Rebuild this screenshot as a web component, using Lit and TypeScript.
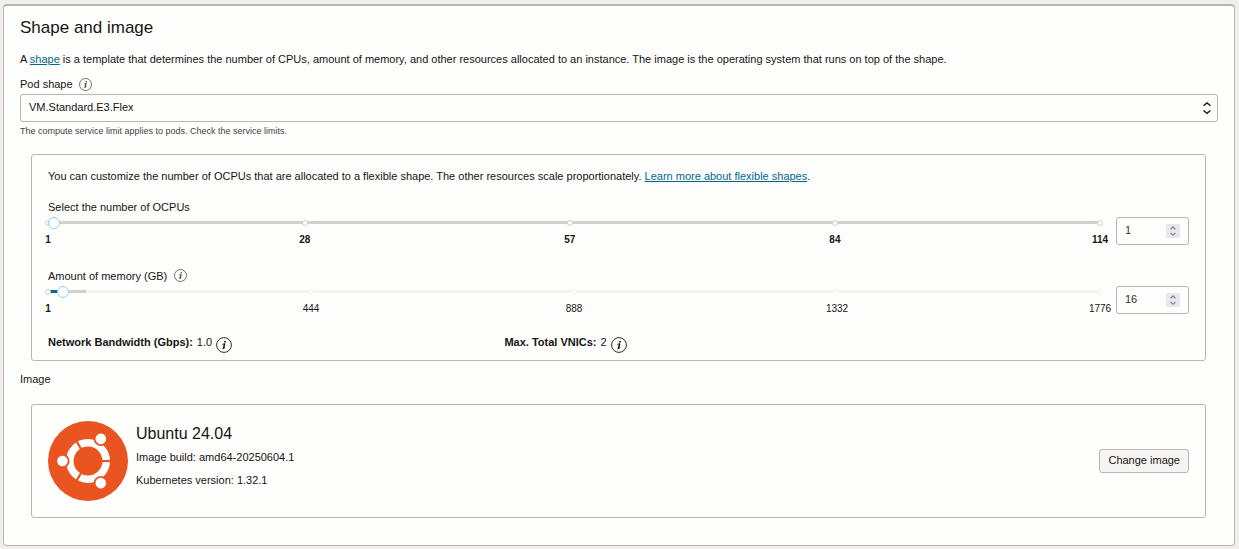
import { LitElement, html, css, svg } from "lit";
import { customElement, property, state } from "lit/decorators.js";

interface Stop {
  label: string;
  at: number;
  strong?: boolean;
}

const ocpuStops: Stop[] = [
  { label: "1", at: 0, strong: true },
  { label: "28", at: 244, strong: true },
  { label: "57", at: 496, strong: true },
  { label: "84", at: 748, strong: true },
  { label: "114", at: 1000, strong: true },
];

const memoryStops: Stop[] = [
  { label: "1", at: 0, strong: true },
  { label: "444", at: 250 },
  { label: "888", at: 500 },
  { label: "1332", at: 750 },
  { label: "1776", at: 1000 },
];

@customElement("info-icon")
class InfoIcon extends LitElement {
  static styles = css`
    :host {
      display: inline-flex;
      width: 13px;
      height: 13px;
      color: #45413e;
    }
    :host([large]) {
      width: 16px;
      height: 16px;
      color: #161513;
    }
    svg {
      width: 100%;
      height: 100%;
    }
  `;

  render() {
    return html`<svg viewBox="0 0 16 16" role="img" aria-label="Information">
      <circle cx="8" cy="8" r="7.4" fill="none" stroke="currentColor" stroke-width="0.9" />
      <circle cx="9" cy="4.7" r="0.9" fill="currentColor" />
      <path
        d="M6.5 7.3 L8 6.9 M6.9 11.6 L8.9 10.6"
        fill="none"
        stroke="currentColor"
        stroke-width="0.8"
        stroke-linecap="round"
      />
      <path
        d="M8.6 6.9 L7.5 11.2"
        fill="none"
        stroke="currentColor"
        stroke-width="1.5"
        stroke-linecap="round"
      />
    </svg>`;
  }
}

@customElement("resource-slider")
class ResourceSlider extends LitElement {
  static styles = css`
    :host {
      display: block;
    }
    .label {
      display: flex;
      align-items: center;
      gap: 7px;
      height: 17px;
      margin-bottom: 2px;
    }
    .row {
      display: grid;
      grid-template-columns: 1fr 73px;
      align-items: start;
      gap: 16px;
    }
    .slider {
      display: grid;
      align-items: start;
    }
    .slider > * {
      grid-area: 1 / 1;
    }
    .track {
      display: flex;
      height: 3px;
      margin-top: 4px;
      background: #f5f4f2;
    }
    .filled {
      background: #00688c;
    }
    .available {
      background: #d4cfca;
    }
    .stops {
      display: flex;
      margin-top: 3px;
    }
    .stop {
      display: flex;
      flex-direction: column;
      align-items: center;
      gap: 8px;
      width: 0;
      font-size: 10px;
      line-height: 12px;
    }
    .dot {
      box-sizing: border-box;
      flex: none;
      width: 6px;
      height: 6px;
      border: 1px solid #d4cfca;
      border-radius: 50%;
      background: #fefefc;
    }
    .dot.faint {
      border-color: #f3f2f0;
    }
    .strong {
      font-weight: 700;
    }
    .range {
      appearance: none;
      width: 100%;
      height: 12px;
      margin: 0;
      background: transparent;
    }
    .range::-webkit-slider-thumb {
      appearance: none;
      box-sizing: border-box;
      width: 12px;
      height: 12px;
      border: 1px solid #8fd2f5;
      border-radius: 50%;
      background: #ffffff;
    }
    .number {
      display: grid;
      grid-template-columns: 1fr 23px;
      align-items: center;
    }
    .value {
      grid-area: 1 / 1 / 2 / 3;
      appearance: textfield;
      box-sizing: border-box;
      width: 100%;
      height: 28px;
      margin: 0;
      padding: 0 24px 2px 8px;
      border: 1px solid #bbb5ae;
      border-radius: 3px;
      background: #fefefc;
      color: #33302d;
      font: inherit;
    }
    .value::-webkit-inner-spin-button {
      appearance: none;
      margin: 0;
    }
    .spin {
      grid-area: 1 / 2;
      width: 14px;
      height: 14px;
      background: #e8e7ed;
      pointer-events: none;
    }
  `;

  @property() label = "";
  @property() name = "";
  @property({ type: Number }) max = 1;
  @property({ type: Number }) limit = 1;
  @property({ type: Number }) value = 1;
  @property({ type: Boolean }) info = false;
  @property({ attribute: false }) stops: Stop[] = [];

  private onInput(e: Event) {
    this.value = Number((e.target as HTMLInputElement).value);
  }

  render() {
    const used = ((this.value - 1) / (this.max - 1)) * 100;
    const open = (this.limit / this.max) * 100 - used;
    return html`
      <div class="label">
        <label for=${this.name}>${this.label}</label>
        ${this.info ? html`<info-icon></info-icon>` : ""}
      </div>
      <div class="row">
        <div class="slider">
          <div class="track">
            <span class="filled" style="width:${used}%"></span>
            <span class="available" style="width:${open}%"></span>
          </div>
          <div class="stops">
            ${this.stops.map((s, i) => {
              const next = this.stops[i + 1];
              const faint = s.at / 10 > used + open;
              return html`<div class="stop">
                  <span class="dot ${faint ? "faint" : ""}"></span>
                  <span class=${s.strong ? "strong" : ""}>${s.label}</span>
                </div>
                ${next ? html`<div style="flex:${next.at - s.at}"></div>` : ""}`;
            })}
          </div>
          <input
            class="range"
            type="range"
            id=${this.name}
            min="1"
            max=${this.max}
            .value=${String(this.value)}
            @input=${this.onInput}
          />
        </div>
        <div class="number">
          <input
            class="value"
            type="number"
            aria-label=${this.label}
            min="1"
            max=${this.max}
            .value=${String(this.value)}
            @input=${this.onInput}
          />
          <svg class="spin" viewBox="0 0 14 14" aria-hidden="true">
            <path
              d="M4.5 5.2 L7 2.9 L9.5 5.2 M4.5 8.9 L7 11.2 L9.5 8.9"
              fill="none"
              stroke="#8b8a91"
              stroke-width="1.3"
            />
          </svg>
        </div>
      </div>
    `;
  }
}

@customElement("app-root")
class AppRoot extends LitElement {
  static styles = css`
    :host {
      display: block;
      box-sizing: border-box;
      min-height: 100vh;
      padding: 4px 4px 3px 3px;
      background: #f1efed;
      color: #161513;
      font-family: "Liberation Sans", Arial, sans-serif;
      font-size: 11px;
      line-height: 16px;
    }
    .card {
      padding: 10px 16px 27px;
      border: 1px solid #bbb5ae;
      border-top-width: 2px;
      border-radius: 4px;
      background: #fefefc;
    }
    h2,
    h3,
    p,
    dl,
    dd {
      margin: 0;
      font-weight: 400;
    }
    h2 {
      font-size: 17px;
      line-height: 24px;
    }
    a {
      color: #00688c;
      text-decoration: underline;
      text-underline-offset: 1px;
    }
    .intro {
      margin-top: 11px;
    }
    .label {
      display: flex;
      align-items: center;
      gap: 6px;
      margin-top: 9px;
    }
    .select {
      display: grid;
      grid-template-columns: 1fr 16px;
      align-items: center;
      margin-top: 2px;
    }
    select {
      grid-area: 1 / 1 / 2 / 3;
      appearance: none;
      width: 100%;
      height: 28px;
      padding: 0 24px 2px 8px;
      border: 1px solid #bbb5ae;
      border-radius: 3px;
      background: #fefefc;
      color: inherit;
      font: inherit;
    }
    .arrows {
      grid-area: 1 / 2;
      width: 10px;
      height: 14px;
      pointer-events: none;
    }
    .hint {
      margin-top: 3px;
      color: #45413e;
      font-size: 9px;
      line-height: 12px;
    }
    .panel {
      margin: 17px 12px 0 11px;
      padding: 13px 16px 7px;
      border: 1px solid #bbb5ae;
      border-radius: 3px;
    }
    .ocpu {
      margin-top: 14px;
    }
    .memory {
      margin-top: 21px;
    }
    .facts {
      display: grid;
      grid-template-columns: 2fr 3fr;
      margin-top: 19px;
    }
    .fact {
      display: flex;
      gap: 4px;
    }
    .fact dt {
      font-weight: 700;
    }
    .fact info-icon {
      margin-top: 3px;
    }
    .section {
      margin-top: 10px;
    }
    .image {
      display: flex;
      align-items: center;
      gap: 8px;
      padding: 16px;
    }
    .logo {
      width: 80px;
      height: 80px;
    }
    .details {
      flex: 1;
      align-self: start;
      line-height: 23px;
    }
    h3 {
      font-size: 16px;
      line-height: 25px;
    }
    button {
      height: 24px;
      padding: 0 8px 2px;
      border: 1px solid #bbb5ae;
      border-radius: 3px;
      background: #f6f5f3;
      color: inherit;
      font: inherit;
    }
  `;

  @state() shape = "VM.Standard.E3.Flex";

  private logo() {
    const angles = [0, 120, 240];
    return html`<svg class="logo" viewBox="0 0 80 80" role="img" aria-label="Ubuntu">
      <circle cx="40" cy="40" r="40" fill="#e95420" />
      <circle cx="40" cy="40" r="18.2" fill="none" stroke="#ffffff" stroke-width="7.6" />
      ${angles.map(
        (a) => svg`<g transform="rotate(${a} 40 40)">
          <rect x="53" y="38.9" width="10" height="2.2" fill="#e95420" />
          <circle cx="14.4" cy="40" r="7.2" fill="#e95420" />
          <circle cx="14.4" cy="40" r="5.3" fill="#ffffff" />
        </g>`
      )}
    </svg>`;
  }

  render() {
    return html`
      <section class="card">
        <h2>Shape and image</h2>
        <p class="intro">
          A <a href="#shape">shape</a> is a template that determines the number of CPUs, amount of
          memory, and other resources allocated to an instance. The image is the operating system
          that runs on top of the shape.
        </p>
        <div class="label"><label for="shape">Pod shape</label><info-icon></info-icon></div>
        <div class="select">
          <select id="shape">
            <option>${this.shape}</option>
          </select>
          <svg class="arrows" viewBox="0 0 10 14" aria-hidden="true">
            <path
              d="M1.5 4.8 L5 1.9 L8.5 4.8 M1.5 9.4 L5 12.3 L8.5 9.4"
              fill="none"
              stroke="#161513"
              stroke-width="1.3"
            />
          </svg>
        </div>
        <p class="hint">The compute service limit applies to pods. Check the service limits.</p>

        <div class="panel">
          <p>
            You can customize the number of OCPUs that are allocated to a flexible shape. The other
            resources scale proportionately.
            <a href="#flexible">Learn more about flexible shapes</a>.
          </p>
          <resource-slider
            class="ocpu"
            name="ocpus"
            label="Select the number of OCPUs"
            max="114"
            limit="114"
            value="1"
            .stops=${ocpuStops}
          ></resource-slider>
          <resource-slider
            class="memory"
            name="memory"
            label="Amount of memory (GB)"
            info
            max="1776"
            limit="64"
            value="16"
            .stops=${memoryStops}
          ></resource-slider>
          <dl class="facts">
            <div class="fact">
              <dt>Network Bandwidth (Gbps):</dt>
              <dd>1.0</dd>
              <info-icon large></info-icon>
            </div>
            <div class="fact">
              <dt>Max. Total VNICs:</dt>
              <dd>2</dd>
              <info-icon large></info-icon>
            </div>
          </dl>
        </div>

        <p class="section">Image</p>
        <div class="panel image">
          ${this.logo()}
          <div class="details">
            <h3>Ubuntu 24.04</h3>
            <p>Image build: amd64-20250604.1</p>
            <p>Kubernetes version: 1.32.1</p>
          </div>
          <button type="button">Change image</button>
        </div>
      </section>
    `;
  }
}
